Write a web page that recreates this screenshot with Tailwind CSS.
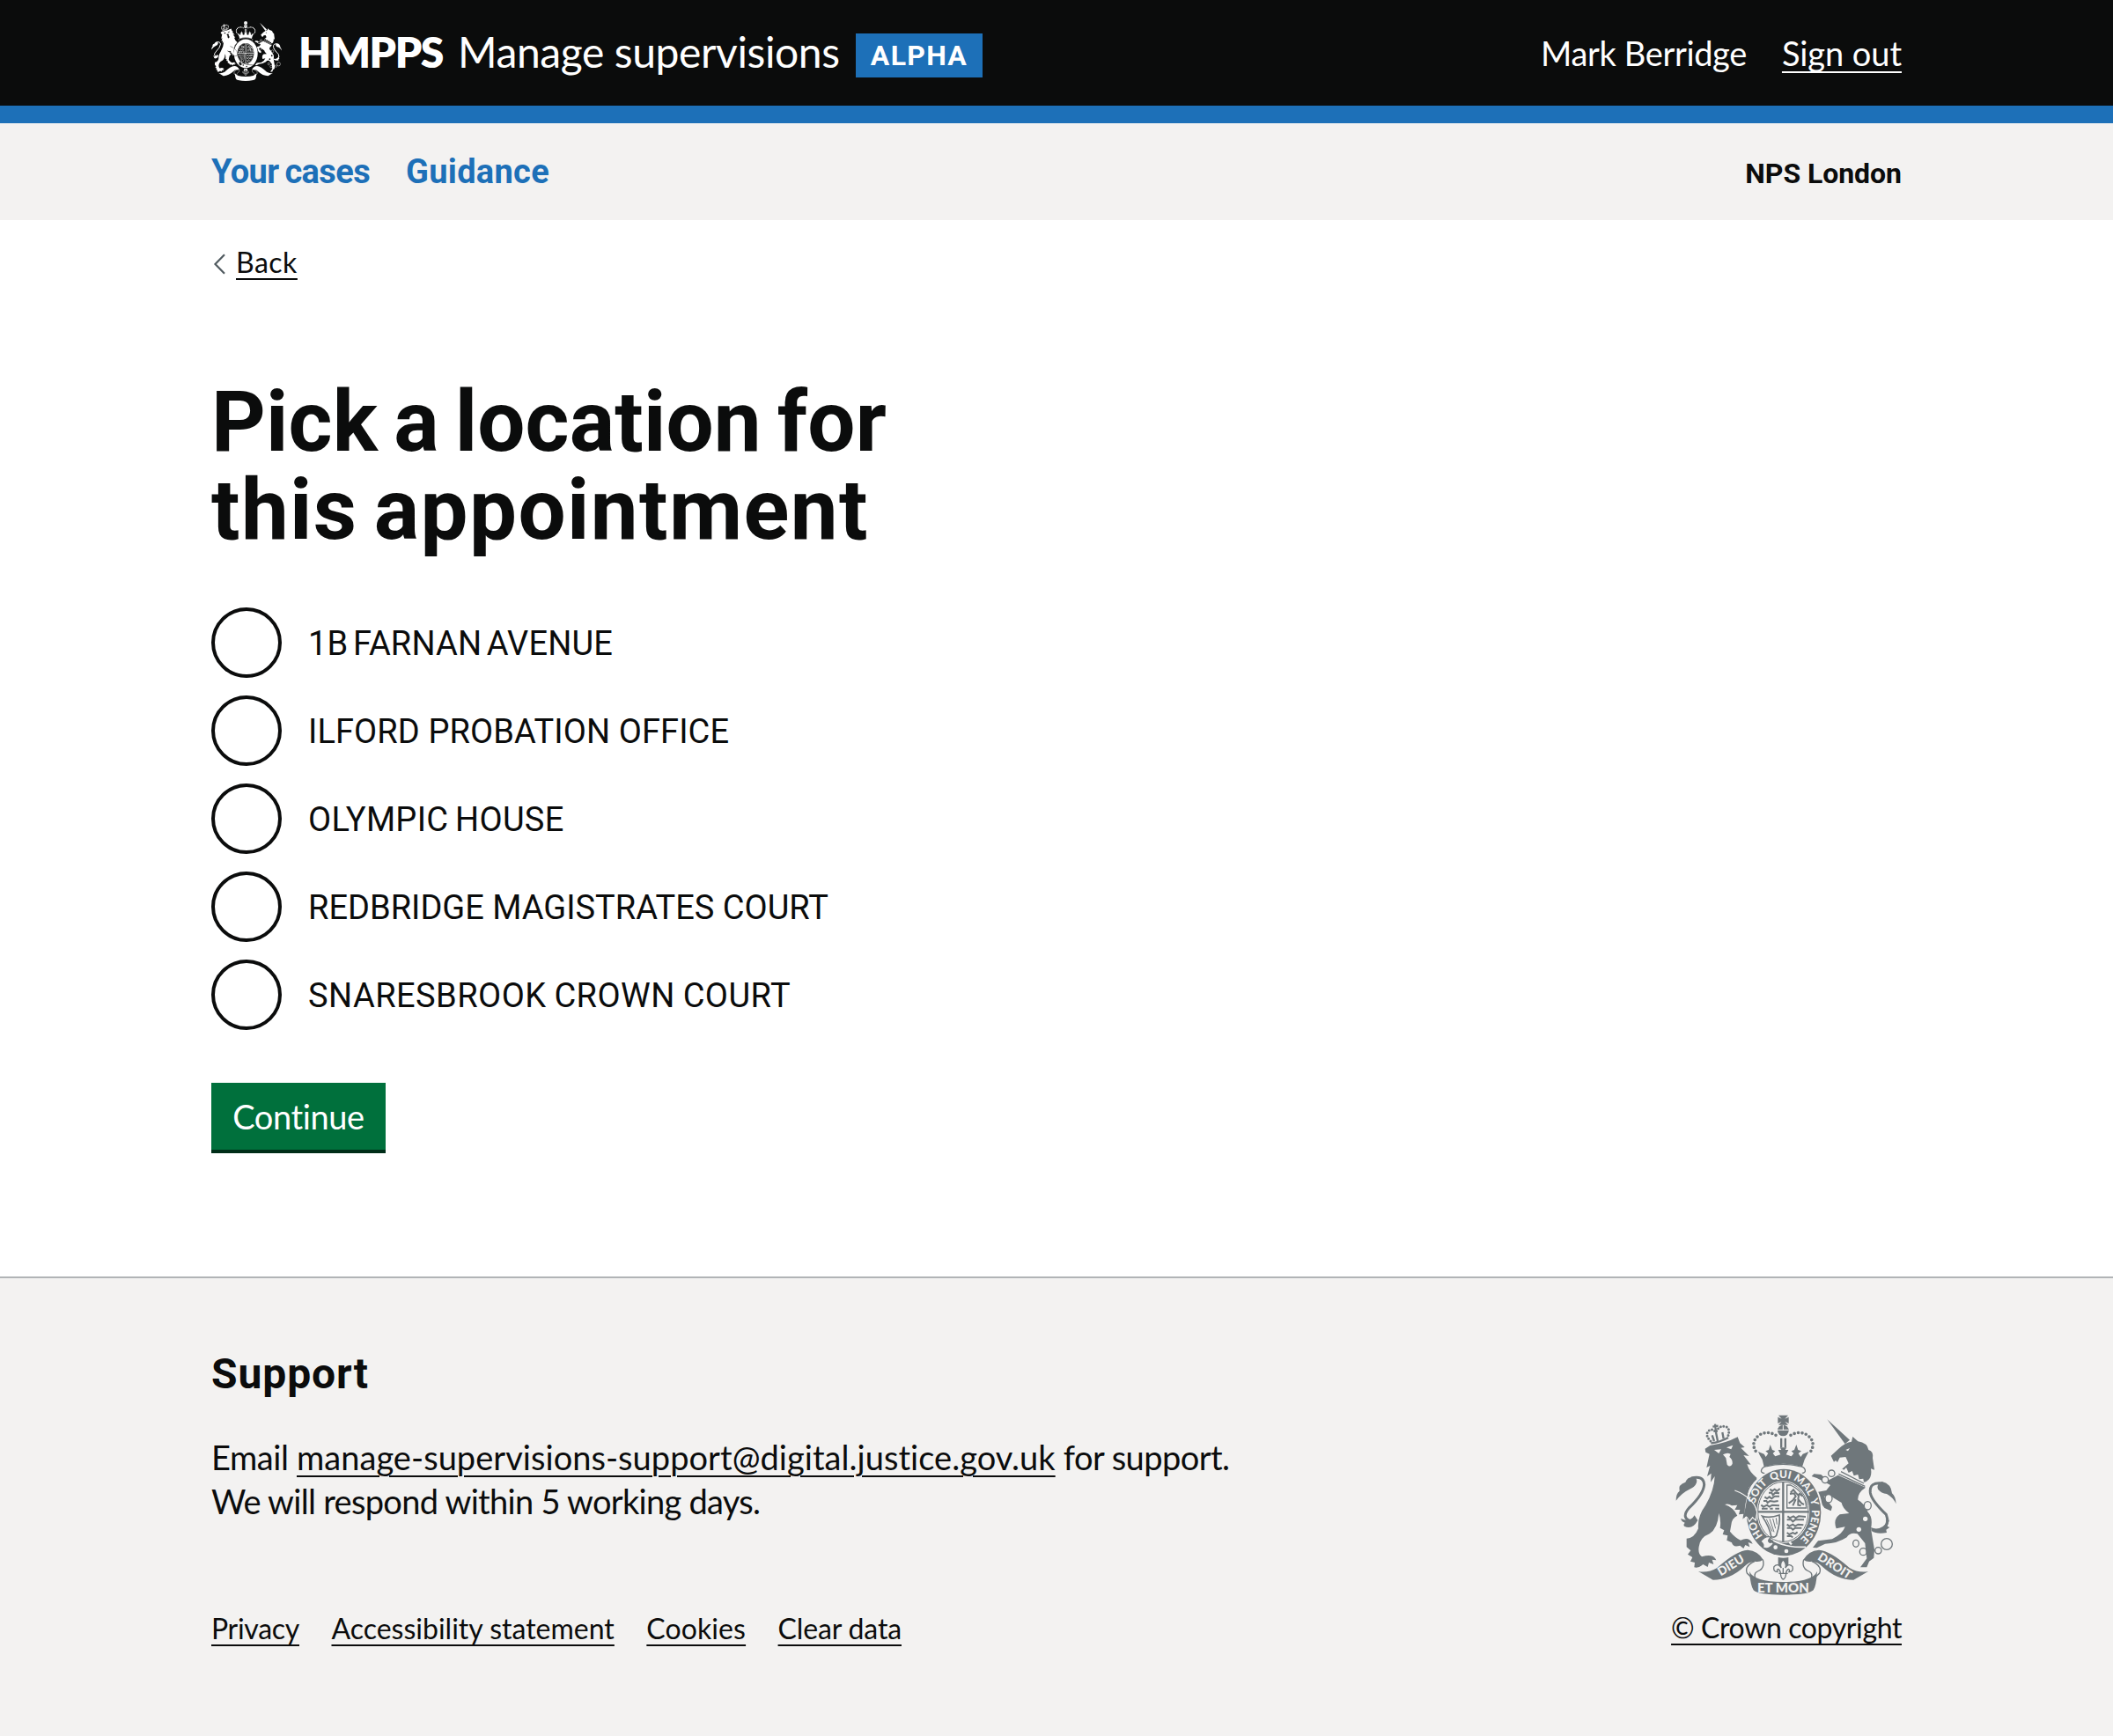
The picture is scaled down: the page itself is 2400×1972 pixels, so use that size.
<!DOCTYPE html>
<html lang="en">
<head>
<meta charset="utf-8">
<title>Manage supervisions</title>
<script src="https://cdn.jsdelivr.net/npm/@tailwindcss/browser@4"></script>
</head>
<body class="bg-white text-[#0b0c0c] font-['Lato','Liberation_Sans',sans-serif] text-[38px]">

<!-- Shared crest artwork: currentColor for the figure, --cut for the gaps -->
<svg class="hidden" aria-hidden="true">
  <symbol id="crest" viewBox="70 52 753 615" preserveAspectRatio="none">
    <g fill="currentColor" stroke="none">
      <!-- lion -->
      <path d="M171 168 L188 157 Q240 150 282 128 L290 149 L306 163 L293 165 L321 193 L302 190 L327 222 L314 221 Q322 248 348 268 L320 300 L316 322 Q340 345 346 378 L348 394 L338 414 L331 402 L318 414 L315 400 L299 408 L302 390 L286 392 L290 376 L272 376 L281 360 L262 362 Q250 353 238 358 Q268 368 281 396 Q262 404 260 428 L256 450 Q272 470 292 480 Q322 466 333 492 L318 487 L323 503 L308 496 L302 508 L290 498 Q266 506 262 488 L245 480 L248 464 L231 460 L236 446 L222 438 Q226 412 218 388 Q214 440 186 458 Q154 470 150 502 Q146 526 160 536 Q200 524 209 548 L195 546 L200 562 L184 556 L180 571 L164 562 Q150 576 134 572 L136 556 L121 552 L128 538 L112 528 L122 515 L108 503 L108 474 Q134 474 148 440 Q144 400 172 362 Q202 310 204 262 L190 282 L192 252 L178 262 L188 226 L176 232 L186 186 L173 180 Z"/>
      <path d="M72 345 Q72 320 84 312 Q78 290 104 282 Q110 264 130 264 Q146 266 142 284 Q136 300 118 306 Q92 318 72 345 Z"/>
      <path d="M135 395 Q120 420 88 406 Q92 418 102 420 Q96 426 100 432 Q128 446 146 412 Z"/>
      <!-- unicorn -->
      <path d="M587 68 L664 138 L648 152 Z"/>
      <path d="M600 192 L626 168 Q650 146 670 144 L674 127 L692 143 Q724 148 728 172 Q746 178 742 200 L748 240 L736 236 Q740 258 730 272 L716 284 L634 240 L660 218 L650 196 L630 198 L622 214 L616 208 L610 213 Z"/>
      <path d="M624 258 L718 300 Q690 318 692 342 Q716 356 726 384 Q744 402 736 440 L748 512 L746 540 L730 552 L722 572 L700 572 L722 542 L716 490 L690 458 Q664 452 654 470 Q620 492 580 492 L552 506 L538 505 L556 482 L604 476 Q640 458 648 434 L618 440 Q606 408 630 392 L662 388 Q640 372 636 352 L600 330 L576 330 L604 366 L600 380 L578 370 L556 340 L552 316 L584 310 L598 292 L580 282 L552 268 L534 262 L542 254 L566 256 L590 276 Z"/>
      <path d="M822 356 Q820 330 808 320 Q806 288 774 280 Q754 286 760 306 Q772 320 790 322 Q812 334 822 356 Z"/>
      <path d="M736 436 Q770 452 800 408 L792 432 L800 436 L788 444 L790 454 Q756 460 738 448 Z"/>
    </g>
    <g fill="none" stroke="currentColor" stroke-width="9">
      <path d="M120 414 Q88 402 118 368 Q166 322 168 290 Q166 258 124 268"/>
      <path d="M778 444 Q800 420 788 392 Q738 344 734 318 Q730 280 776 286"/>
      <g stroke-width="4">
        <circle cx="602" cy="252" r="11"/><circle cx="580" cy="274" r="11" class="fill-[var(--cut)]"/><ellipse cx="592" cy="338" rx="12" ry="14" class="fill-[var(--cut)]"/><ellipse cx="725" cy="362" rx="12" ry="14" class="fill-[var(--cut)]"/>
        <ellipse cx="685" cy="491" rx="10" ry="12"/><circle cx="710" cy="519" r="12"/><circle cx="761" cy="515" r="11"/><circle cx="790" cy="493" r="19"/>
      </g>
    </g>
    <g class="fill-[var(--cut)]">
      <circle cx="717" cy="407" r="8"/><circle cx="695" cy="443" r="8"/>
      <path d="M202 172 L226 170 L218 184 Z M244 164 L266 156 L260 170 Z M232 188 Q246 180 258 186 L254 196 Q266 206 264 220 Q256 234 246 222 L242 200 Z M650 172 L664 166 L658 176 Z"/>
      <path d="M626 228 L644 240 L652 232 L660 250 L672 244 L678 260 L692 256 L696 272 L710 270 L712 282 L722 280 L714 298 L626 256 Z"/>
    </g>
    <path d="M634 246 L712 286 M716 296 L626 254" fill="none" stroke="currentColor" stroke-width="4"/>
    <!-- lion's crown -->
    <g fill="none" stroke="currentColor">
      <path d="M190 142 Q170 122 182 108 Q196 96 208 112 Q218 88 238 92 Q260 96 248 128" stroke-width="9" stroke-linecap="round" stroke-dasharray="0 10.5"/>
      <path d="M191 149 Q222 146 250 130" stroke-width="7"/>
      <path d="M205 84 L208 110 M197 93 L216 90 M208 112 L214 142 M195 122 L202 142 M230 112 L234 134" stroke-width="7"/>
    </g>
    <!-- central crown -->
    <g fill="currentColor">
      <path d="M421 54 L454 54 L443 66 L456 60 V82 L443 75 L454 87 L421 87 L432 75 L419 82 V60 L432 66 Z"/>
      <circle cx="437" cy="106" r="19"/>
      <path d="M366 205 Q356 190 352 178 L372 186 L378 196 L386 184 L377 176 L388 172 L393 154 L400 172 L410 176 L402 184 L410 194 L428 188 L420 172 H431 L426 164 H449 L444 172 H455 L447 188 L465 194 L473 184 L465 176 L475 172 L482 154 L488 172 L499 176 L489 184 L497 196 L504 186 L524 178 Q518 190 510 205 L502 230 Q437 208 372 230 Z"/>
      <path d="M427 132 h7 v32 h-7 z M441 132 h7 v32 h-7 z"/>
    </g>
    <path d="M418 104 H456 M437 88 V106" class="stroke-[var(--cut)]" stroke-width="3"/>
    <g fill="none" stroke="currentColor" stroke-width="11" stroke-linecap="round" stroke-dasharray="0 13.5">
      <path d="M412 122 Q384 106 358 120 Q326 142 342 174 L350 186"/>
      <path d="M463 122 Q491 106 517 120 Q549 142 533 174 L525 186"/>
    </g>
    <path d="M374 252 Q358 250 364 238 Q370 228 382 228 Q437 214 492 228 Q506 228 511 238 Q516 250 500 252" fill="none" stroke="currentColor" stroke-width="4"/>
    <!-- garter and shield -->
    <ellipse cx="439" cy="386" rx="133" ry="153" class="fill-[var(--cut)]"/>
    <path d="M346 270 Q322 292 314 320" fill="none" stroke="currentColor" stroke-width="4"/>
    <ellipse cx="439" cy="385" rx="127" ry="148" fill="currentColor"/>
    <ellipse cx="437" cy="383" rx="90" ry="106" class="fill-[var(--cut)]"/>
    <ellipse cx="437" cy="383" rx="86" ry="102" fill="none" stroke="currentColor" stroke-width="3"/>
    <path d="M437 280 V486 M350 383 H525" fill="none" stroke="currentColor" stroke-width="7"/>
    <g fill="none" stroke="currentColor" stroke-width="6">
      <path d="M392 306 l8 6 8 -6 8 6 10 -8 M388 318 l10 0 4 8 8 -8 14 2 M374 332 l8 6 8 -6 8 6 10 -8 16 0 M370 346 l10 0 4 6 8 -6 14 2 14 -2 M362 360 l8 6 12 -6 8 6 10 -6 24 2 M364 372 h20 m8 0 h10 m8 0 h14"/>
      <path d="M452 398 l8 6 12 -6 8 6 10 -6 24 2 M450 410 h14 l6 6 8 -6 h30 M450 426 l8 6 12 -6 8 6 10 -6 18 2 M450 438 h14 l6 6 8 -6 h22 M450 454 l8 6 12 -6 8 4 8 -6 M450 466 h14 l6 4"/>
      <path d="M450 292 V370 H516 Q514 316 462 292 Z" stroke-width="4"/>
      <path d="M456 354 l14 -10 10 -14 -6 -10 -14 2 M462 318 l10 -10 8 10 10 10 -2 12 12 14 8 4 M480 340 l-10 22 M488 344 l0 16 10 2 M490 320 l14 10" />
      <path d="M366 398 Q392 406 424 394 Q428 420 414 464 Q404 474 396 466 Q392 438 366 398 Z" stroke-width="5"/>
      <path d="M380 408 L400 450 M391 407 L406 452 M402 406 L411 440 M413 404 L416 426" stroke-width="3"/>
    </g>
    <!-- lion's forepaw resting on the garter -->
    <path d="M272 310 Q304 322 322 340 Q342 356 348 384 L344 412 L333 402 L322 416 L316 402 L300 408" class="fill-none stroke-[var(--cut)]" stroke-width="4"/>
    <path d="M314 338 Q340 356 345 384 L341 408 L333 397 L321 411 L314 398 L302 402 Z" fill="currentColor"/>
    <!-- buckle and strap -->
    <path d="M360 484 Q378 462 396 470 Q380 482 392 488 Q402 484 404 492 Q386 516 368 504 Q374 494 360 484 Z" class="fill-[var(--cut)]" stroke="currentColor" stroke-width="4"/>
    <path d="M404 482 Q450 506 514 503" fill="none" class="stroke-[var(--cut)]" stroke-width="5"/>
    <path d="M458 486 L466 494" class="stroke-[var(--cut)]" stroke-width="7"/>
    <circle cx="411" cy="504" r="7" class="fill-[var(--cut)]"/><circle cx="448" cy="517" r="7" class="fill-[var(--cut)]"/>
    <!-- pendant fleur-de-lis -->
    <path d="M420 538 Q437 542 455 538 V572 H420 Z" fill="currentColor"/>
    <path d="M437 546 Q424 560 431 574 Q418 556 406 570 Q402 588 418 588 Q414 580 420 578 Q428 582 428 594 L430 604 Q437 622 445 604 L447 594 Q447 582 455 578 Q461 580 457 588 Q473 588 469 570 Q457 556 444 574 Q451 560 437 546 Z" class="fill-[var(--cut)]" stroke="currentColor" stroke-width="4"/>
    <path d="M422 593 H453 M437 574 V592" stroke="currentColor" stroke-width="4"/>
    <!-- motto ribbon -->
    <path d="M148 586 Q182 592 212 574 Q276 516 316 513 Q352 516 369 546 Q356 556 340 552 Q318 554 304 570 Q256 614 198 615 Z" fill="currentColor"/>
    <path d="M727 586 Q693 592 663 574 Q599 516 559 513 Q523 516 506 546 Q519 556 535 552 Q557 554 571 570 Q619 614 677 615 Z" fill="currentColor"/>
    <path d="M322 586 Q338 622 437 622 Q537 622 553 586 Q550 636 540 650 Q524 666 437 666 Q350 666 336 650 Q326 636 322 586 Z" fill="currentColor"/>
    <g fill="none" stroke="currentColor" stroke-width="4">
      <path d="M340 552 Q304 568 314 592 L326 604 M368 546 Q376 576 350 586 Q336 592 342 608"/>
      <path d="M535 552 Q571 568 561 592 L549 604 M507 546 Q499 576 525 586 Q539 592 533 608"/>
    </g>
  </symbol>
</svg>

<header class="bg-[#0b0c0c] text-white border-b-[20px] border-[#1d70b8] h-[140px]">
  <div class="w-[1920px] mx-auto flex items-start">
    <svg class="w-[80px] h-[68px] mt-6 [--cut:#0b0c0c]"><use href="#crest"/></svg>
    <span class="w-[181px] ml-[19px] mt-[34px] text-[48px] leading-[50px] font-extrabold tracking-[-1.4px]">HMPPS</span>
    <span class="w-[452px] mt-[34px] text-[48px] leading-[50px] tracking-[-0.4px] whitespace-nowrap">Manage supervisions</span>
    <span class="w-36 h-[50px] mt-[38px] bg-[#1d70b8] font-['Roboto'] text-[32px] leading-[50px] font-bold tracking-[1.3px] text-center">ALPHA</span>
    <div class="ml-auto mt-[35px] flex gap-10 leading-[50px]">
      <span class="tracking-[-0.35px]">Mark Berridge</span>
      <a class="underline decoration-2 underline-offset-[6px] [text-decoration-skip-ink:none] tracking-[-0.07px]">Sign out</a>
    </div>
  </div>
</header>

<nav class="bg-[#f3f2f1] h-[110px]">
  <div class="w-[1920px] h-full mx-auto flex items-center font-['Roboto'] font-bold">
    <a class="w-[221px] text-[#1d70b8] tracking-[-0.6px] [word-spacing:-2px]">Your cases</a>
    <a class="text-[#1d70b8] tracking-[0.3px]">Guidance</a>
    <span class="ml-auto pt-1 text-[32px] tracking-[-0.05px]">NPS London</span>
  </div>
</nav>

<main class="w-[1920px] h-[1200px] mx-auto pt-[23px]">
  <div class="flex items-center h-[50px] text-[32px] leading-[50px]">
    <svg class="w-[28px] h-[24px] mt-1" viewBox="0 0 28 24" fill="none" stroke="#505a5f" stroke-width="2.2"><path d="M15 1.2 L4.5 12 L15 22.8"/></svg>
    <a class="underline decoration-2 underline-offset-[6px] tracking-[0.5px]">Back</a>
  </div>
  <h1 class="mt-[106px] font-['Roboto'] text-[96px] leading-[100px] font-bold">
    <span class="block tracking-[0.15px] [word-spacing:-6px]">Pick a location for</span>
    <span class="block tracking-[1.4px] [word-spacing:-7px]">this appointment</span>
  </h1>
  <div class="mt-[61px] flex flex-col gap-5 font-['Roboto']">
    <label class="flex items-center gap-[30px]"><span class="size-20 rounded-full border-4 border-[#0b0c0c]"></span><span class="pt-0.5 tracking-[0.15px] [word-spacing:-4px]">1B FARNAN AVENUE</span></label>
    <label class="flex items-center gap-[30px]"><span class="size-20 rounded-full border-4 border-[#0b0c0c]"></span><span class="pt-0.5 tracking-[0.1px]">ILFORD PROBATION OFFICE</span></label>
    <label class="flex items-center gap-[30px]"><span class="size-20 rounded-full border-4 border-[#0b0c0c]"></span><span class="pt-0.5 tracking-[0.3px] [word-spacing:-2px]">OLYMPIC HOUSE</span></label>
    <label class="flex items-center gap-[30px]"><span class="size-20 rounded-full border-4 border-[#0b0c0c]"></span><span class="pt-0.5">REDBRIDGE MAGISTRATES COURT</span></label>
    <label class="flex items-center gap-[30px]"><span class="size-20 rounded-full border-4 border-[#0b0c0c]"></span><span class="pt-0.5 tracking-[0.45px] [word-spacing:-1px]">SNARESBROOK CROWN COURT</span></label>
  </div>
  <button class="block mt-[60px] w-[198px] h-[76px] bg-[#00703c] text-white shadow-[0_4px_0_#002d18] leading-[76px] tracking-[-0.4px]">Continue</button>
</main>

<footer class="h-[522px] bg-[#f3f2f1] border-t-2 border-[#b1b4b6]">
  <div class="w-[1920px] mx-auto flex justify-between">
    <div>
      <h2 class="mt-[79px] font-['Roboto'] text-[48px] leading-[60px] font-bold tracking-[0.9px]">Support</h2>
      <p class="mt-[39px] leading-[50px] whitespace-nowrap"><span class="tracking-[-0.4px]">Email </span><a class="underline decoration-2 underline-offset-[6px] tracking-[0.04px]">manage-supervisions-support@digital.justice.gov.uk</a><span class="tracking-[-0.55px]"> for support.</span><br><span class="tracking-[-0.7px]">We will respond within 5 working days.</span></p>
      <div class="mt-[95px] flex gap-[36.5px] text-[32px] leading-[50px]">
        <a class="underline decoration-2 underline-offset-[6px] [text-decoration-skip-ink:none] tracking-[-0.3px]">Privacy</a>
        <a class="underline decoration-2 underline-offset-[6px] [text-decoration-skip-ink:none]">Accessibility statement</a>
        <a class="underline decoration-2 underline-offset-[6px] tracking-[0.1px]">Cookies</a>
        <a class="underline decoration-2 underline-offset-[6px] tracking-[-0.15px]">Clear data</a>
      </div>
    </div>
    <div class="flex flex-col items-end">
      <svg class="w-[251px] h-[205px] mt-[155px] mr-[6px] text-[#6f777b] [--cut:#f3f2f1]" viewBox="70 52 753 615">
        <use href="#crest" x="70" y="52" width="753" height="615"/>
        <defs><path id="garter" d="M437 498 A98 115 0 0 1 437 268 A98 115 0 0 1 437 498"/></defs>
        <g class="fill-[#f3f2f1] font-['Lato'] font-black text-[36px]" text-anchor="middle">
          <text><textPath href="#garter" startOffset="16%">HO</textPath></text>
          <text><textPath href="#garter" startOffset="35.3%">SOIT</textPath></text>
          <text><textPath href="#garter" startOffset="48.7%">QUI</textPath></text>
          <text><textPath href="#garter" startOffset="61%">MAL</textPath></text>
          <text><textPath href="#garter" startOffset="70.3%">Y</textPath></text>
          <text><textPath href="#garter" startOffset="82.3%">PENSE</textPath></text>
        </g>
        <g class="fill-[#f3f2f1] font-['Lato'] font-black text-[41px]" text-anchor="middle">
          <text transform="translate(266 577) rotate(-31)">DIEU</text>
          <text x="437" y="658" class="text-[45px]">ET MON</text>
          <text transform="translate(606 579) rotate(33)">DROIT</text>
        </g>
      </svg>
      <a class="mt-[12px] text-[32px] leading-[50px] underline decoration-2 underline-offset-[6px] [text-decoration-skip-ink:none] tracking-[-0.38px]">© Crown copyright</a>
    </div>
  </div>
</footer>
</body>
</html>
